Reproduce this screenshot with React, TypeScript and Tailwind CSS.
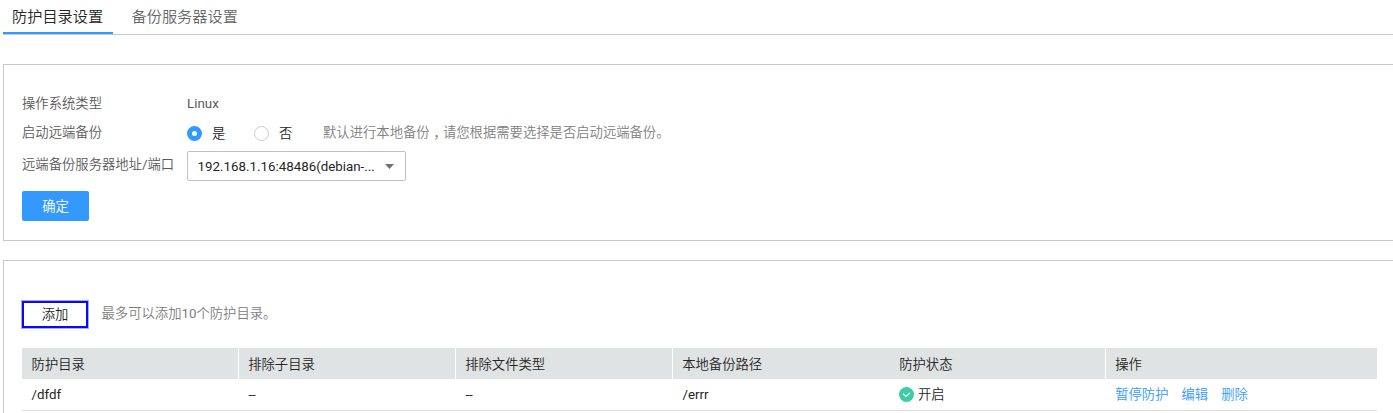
import type { ReactNode } from 'react';

const columns = ['防护目录', '排除子目录', '排除文件类型', '本地备份路径', '防护状态', '操作'];

function Radio({ checked, label }: { checked?: boolean; label: string }) {
  return (
    <label className="flex items-center">
      <span
        className={
          checked
            ? 'box-border size-[15px] rounded-full border-[5px] border-[#3399ff] bg-white'
            : 'box-border size-[15px] rounded-full border border-[#cccccc] bg-white'
        }
      />
      <span className="ml-2.5 pt-0.5 leading-5 text-[#252525]">{label}</span>
    </label>
  );
}

function Row({ label, className, children }: { label: string; className: string; children: ReactNode }) {
  return (
    <div className={`flex ${className}`}>
      <div className="w-[165px] shrink-0 text-[#5a5a5a]">{label}</div>
      {children}
    </div>
  );
}

function CheckIcon() {
  return (
    <svg className="size-[15px] shrink-0" viewBox="0 0 15 15" fill="none">
      <circle cx="7.5" cy="7.5" r="7.5" fill="#3dcca6" />
      <path d="M4 6.7 L7 9.5 L11 5.9" stroke="#ffffff" strokeWidth="1.2" />
    </svg>
  );
}

export default function App() {
  return (
    <div className="h-[413px] overflow-hidden bg-white pl-[3px] font-['Roboto','Noto_Sans_CJK_SC_DemiLight','Noto_Sans_CJK_SC',sans-serif] text-[13.33px] leading-[22px] whitespace-nowrap">
      <nav className="flex h-[35px] border-b border-[#c8c8c8] text-[15.2px]">
        <div className="h-[34px] w-[110px] shrink-0 border-b-2 border-[#3399ff] pl-[9px] leading-[35px] text-[#252525]">
          防护目录设置
        </div>
        <div className="pl-[18.5px] leading-[35px] text-[#666666]">备份服务器设置</div>
      </nav>

      <section className="mt-[29px] h-[177px] border-y border-l border-[#c8c8c8] pl-[18px]">
        <Row label="操作系统类型" className="mt-[28px] h-[29px]">
          <div className="text-[#5a5a5a]">Linux</div>
        </Row>
        <Row label="启动远端备份" className="h-[29px]">
          <div className="flex h-[22px] items-center">
            <div className="w-[67px]">
              <Radio checked label="是" />
            </div>
            <div className="w-[69px]">
              <Radio label="否" />
            </div>
          </div>
          <div className="flex text-[#808080]">
            <span>默认进行本地备份</span>
            <span className="translate-y-1 font-['Noto_Sans_CJK_TC']">，</span>
            <span>请您根据需要选择是否启动远端备份。</span>
          </div>
        </Row>
        <Row label="远端备份服务器地址/端口" className="h-[40px] pt-[3px]">
          <div className="-mt-[3px] flex h-[30px] w-[219px] items-center justify-between rounded-[2px] border border-[#c0c0c0] pr-[11px] pl-[9.5px] text-[#252525]">
            <span className="pt-0.5">192.168.1.16:48486(debian-...</span>
            <svg className="h-[5px] w-[9px]" viewBox="0 0 9 5">
              <path d="M0 0H9L4.5 5Z" fill="#707070" />
            </svg>
          </div>
        </Row>
        <button className="block h-[30px] w-[67px] rounded-[2px] bg-[#3399ff] pt-0.5 text-white">确定</button>
      </section>

      <section className="mt-[19px] h-[160px] border-t border-l border-[#c8c8c8] pt-[39px] pl-[18px]">
        <div className="flex h-[48px]">
          <button className="-ml-px block h-[29px] w-[68px] border border-[#a9a9ee] pt-px text-[#252525] inset-ring-2 inset-ring-[#0a0af0]">
            添加
          </button>
          <div className="ml-[12.5px] pt-[3px] text-[#808080]">最多可以添加10个防护目录。</div>
        </div>
        <div className="w-[1355px] text-[#252525]">
          <div className="grid h-[31px] grid-cols-[217px_217px_217px_217px_216px_1fr] bg-[#dfe3e3] leading-[33px]">
            {columns.map((name, index) => (
              <div
                key={name}
                className={`${index === 0 ? 'pl-[9.6px]' : 'pl-[9.2px]'} ${
                  index === 3 || index === 5 ? '' : 'border-r border-white'
                } h-[31px]`}
              >
                {name}
              </div>
            ))}
          </div>
          <div className="grid h-8 grid-cols-[217px_217px_217px_217px_216px_1fr] border-b border-[#dfe1e1] leading-[31px]">
            <div className="pl-[9.6px]">/dfdf</div>
            <div className="pl-[9.4px]">--</div>
            <div className="pl-[9.4px]">--</div>
            <div className="pl-[9.4px]">/errr</div>
            <div className="flex items-center gap-[4px] pl-[9px]">
              <CheckIcon />
              <span>开启</span>
            </div>
            <div className="flex gap-[13px] pl-[9.2px] text-[#3399ff]">
              <a>暂停防护</a>
              <a>编辑</a>
              <a>删除</a>
            </div>
          </div>
        </div>
      </section>
    </div>
  );
}
